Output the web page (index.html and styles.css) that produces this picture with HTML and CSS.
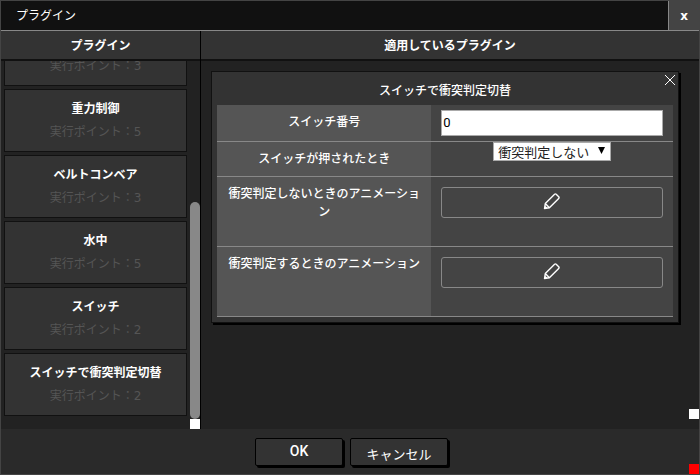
FILE: index.html
```html
<!DOCTYPE html>
<html lang="ja">
<head>
<meta charset="utf-8">
<title>プラグイン</title>
<link rel="stylesheet" href="styles.css">
</head>
<body>
<div class="window">
  <header class="titlebar">
    <h1 class="titlebar-text">プラグイン</h1>
    <button class="titlebar-close" type="button">x</button>
  </header>
  <main class="panes">
    <section class="pane pane-list">
      <h2 class="pane-title">プラグイン</h2>
      <div class="pane-body list-body">
        <ul class="plugin-list">
          <li class="plugin"><span class="plugin-cost">実行ポイント：3</span></li>
          <li class="plugin"><span class="plugin-name">重力制御</span><span class="plugin-cost">実行ポイント：5</span></li>
          <li class="plugin"><span class="plugin-name">ベルトコンベア</span><span class="plugin-cost">実行ポイント：3</span></li>
          <li class="plugin"><span class="plugin-name">水中</span><span class="plugin-cost">実行ポイント：5</span></li>
          <li class="plugin"><span class="plugin-name">スイッチ</span><span class="plugin-cost">実行ポイント：2</span></li>
          <li class="plugin"><span class="plugin-name">スイッチで衝突判定切替</span><span class="plugin-cost">実行ポイント：2</span></li>
        </ul>
        <div class="scrollbar">
          <div class="scrollbar-thumb"></div>
          <div class="scrollbar-corner"></div>
        </div>
      </div>
    </section>
    <section class="pane pane-applied">
      <h2 class="pane-title">適用しているプラグイン</h2>
      <div class="pane-body applied-body">
        <article class="card">
          <button class="card-close" type="button" aria-label="閉じる">
            <svg width="12" height="12" viewBox="0 0 12 12"><path d="M1 1 11 11M11 1 1 11"/></svg>
          </button>
          <h3 class="card-title">スイッチで衝突判定切替</h3>
          <div class="field">
            <label class="field-label" for="switch-no">スイッチ番号</label>
            <div class="field-value field-value-text"><input class="text-input" id="switch-no" type="text" value="0"></div>
          </div>
          <div class="field">
            <label class="field-label" for="on-press">スイッチが押されたとき</label>
            <div class="field-value field-value-select">
              <span class="select-wrap">
                <select class="select" id="on-press"><option>衝突判定しない</option></select>
                <svg class="select-arrow" width="7" height="7" viewBox="0 0 8 8"><path d="M0 0H8L4 8Z"/></svg>
              </span>
            </div>
          </div>
          <div class="field">
            <label class="field-label" for="anim-off">衝突判定しないときのアニメーション</label>
            <div class="field-value field-value-edit">
              <button class="edit" id="anim-off" type="button">
                <svg width="18" height="18" viewBox="0 0 18 18"><path d="M1.5 16.5 2.3 11.6 11.6 2.3Q12.4 1.5 13.2 2.3L15.7 4.8Q16.5 5.6 15.7 6.4L6.4 15.7ZM2.3 11.6 6.4 15.7M1.8 14.2 3.8 16.2"/></svg>
              </button>
            </div>
          </div>
          <div class="field">
            <label class="field-label" for="anim-on">衝突判定するときのアニメーション</label>
            <div class="field-value field-value-edit">
              <button class="edit" id="anim-on" type="button">
                <svg width="18" height="18" viewBox="0 0 18 18"><path d="M1.5 16.5 2.3 11.6 11.6 2.3Q12.4 1.5 13.2 2.3L15.7 4.8Q16.5 5.6 15.7 6.4L6.4 15.7ZM2.3 11.6 6.4 15.7M1.8 14.2 3.8 16.2"/></svg>
              </button>
            </div>
          </div>
        </article>
        <span class="pane-grip"></span>
      </div>
    </section>
  </main>
  <footer class="actions">
    <button class="action action-ok" type="button">OK</button>
    <button class="action action-cancel" type="button">キャンセル</button>
    <span class="resize-grip"></span>
  </footer>
</div>
</body>
</html>
```
FILE: styles.css
```css
* {
  box-sizing: border-box;
}

body {
  margin: 0;
  background: #222;
  color: #fff;
  font: 12px/18px "DejaVu Sans", "Noto Sans CJK JP", sans-serif;
}

h1, h2, h3, ul {
  margin: 0;
  padding: 0;
  font-size: 12px;
}

button, input, select {
  margin: 0;
  color: inherit;
  font-family: "Liberation Sans", "Noto Sans CJK JP", sans-serif;
}

.window {
  display: flex;
  flex-direction: column;
  height: 100vh;
  border: 1px solid #444;
}

.titlebar {
  display: flex;
  height: 30px;
  background: #111;
  border-bottom: 1px solid #888;
}

.titlebar-text {
  flex: 1;
  padding: 2px 0 0 15px;
  font-weight: 400;
  line-height: 27px;
}

.titlebar-close {
  width: 31px;
  padding: 2px 0 0;
  background: #444;
  border: 0;
  border-left: 1px solid #888;
  font: bold 12px/27px "DejaVu Sans", sans-serif;
}

.panes {
  display: flex;
  flex: 1;
  min-height: 0;
}

.pane {
  display: flex;
  flex-direction: column;
  min-width: 0;
}

.pane-list {
  width: 200px;
  border-right: 1px solid #000;
}

.pane-applied {
  flex: 1;
}

.pane-title {
  padding-top: 2px;
  background: #333;
  border-bottom: 2px solid #111;
  line-height: 26px;
  text-align: center;
}

.pane-body {
  flex: 1;
  min-height: 0;
  background: #222;
}

.list-body {
  display: flex;
  justify-content: space-between;
}

.plugin-list {
  display: flex;
  flex: 1;
  flex-direction: column;
  justify-content: flex-end;
  gap: 3px;
  padding: 0 3px 13px;
  overflow: hidden;
  list-style: none;
}

.plugin {
  display: flex;
  flex: none;
  flex-direction: column;
  padding: 8px 0 7px;
  background: #333;
  border: 1px solid #111;
  line-height: 23px;
  text-align: center;
}

.plugin-name {
  font-weight: 700;
}

.plugin-cost {
  color: #555;
}

.scrollbar {
  display: flex;
  flex-direction: column;
  justify-content: flex-end;
  width: 10px;
}

.scrollbar-thumb {
  height: 59%;
  background: #888;
  border-radius: 5px;
}

.scrollbar-corner {
  height: 10px;
  background: #fff;
}

.applied-body {
  position: relative;
  padding: 10px 20px 10px 10px;
}

.card {
  position: relative;
  padding: 5px;
  background: #333;
  border: 1px solid #111;
  box-shadow: 2px 2px 0 #000;
}

.card-title {
  font-weight: 500;
  line-height: 28px;
  text-align: center;
}

.card-close {
  position: absolute;
  top: 2px;
  right: 2px;
  display: flex;
  padding: 0;
  background: none;
  border: 0;
}

.card-close svg,
.edit svg {
  fill: none;
  stroke: #fff;
}

.edit svg {
  stroke-width: 1.4;
  stroke-linejoin: round;
}

.field {
  display: grid;
  grid-template-columns: 47% 53%;
  border-bottom: 1px solid #888;
}

.field-label {
  padding: 8px 10px;
  background: #555;
  font-weight: 500;
  text-align: center;
}

.field-value {
  background: #444;
  text-align: center;
}

.field-value-text {
  padding: 5px 10px;
}

.field-value-select {
  height: 34px;
}

.field-value-edit {
  height: 69px;
  padding: 10px;
}

.text-input {
  display: block;
  width: 100%;
  height: 26px;
  padding: 0 1px 2px;
  background: #fff;
  border: 1px solid #aaa;
  color: #000;
  font-family: Roboto, sans-serif;
  font-size: 13px;
}

.select-wrap {
  position: relative;
  display: inline-block;
}

.select {
  display: block;
  width: 118px;
  height: 19px;
  padding: 2px 4px 0;
  appearance: none;
  background: #fff;
  border: 1px solid #aaa;
  border-radius: 0;
  color: #222;
  font-size: 13px;
}

.select-arrow {
  position: absolute;
  top: 5px;
  right: 6px;
  pointer-events: none;
}

.edit {
  display: flex;
  align-items: center;
  justify-content: center;
  width: 100%;
  height: 31px;
  padding: 0 0 4px;
  background: none;
  border: 1px solid #888;
  border-radius: 3px;
}

.actions {
  position: relative;
  display: flex;
  justify-content: center;
  gap: 7px;
  height: 45px;
  padding-top: 9px;
  padding-left: 3px;
  background: #2a2a2a;
}

.action {
  height: 28px;
  padding: 0 0 2px;
  background: #333;
  border: 1px solid #000;
  border-radius: 2px;
  box-shadow: 2px 2px 0 #000;
}

.action-ok {
  width: 88px;
  font-family: Roboto, sans-serif;
  font-size: 14px;
  font-weight: 500;
}

.action-cancel {
  width: 98px;
  padding: 2px 0 0;
  font-size: 13px;
  font-weight: 400;
}

.pane-grip,
.resize-grip {
  position: absolute;
  right: 0;
  width: 10px;
  height: 10px;
}

.pane-grip {
  bottom: 10px;
  background: #fff;
}

.resize-grip {
  bottom: 0;
  background: #f00;
}
```
